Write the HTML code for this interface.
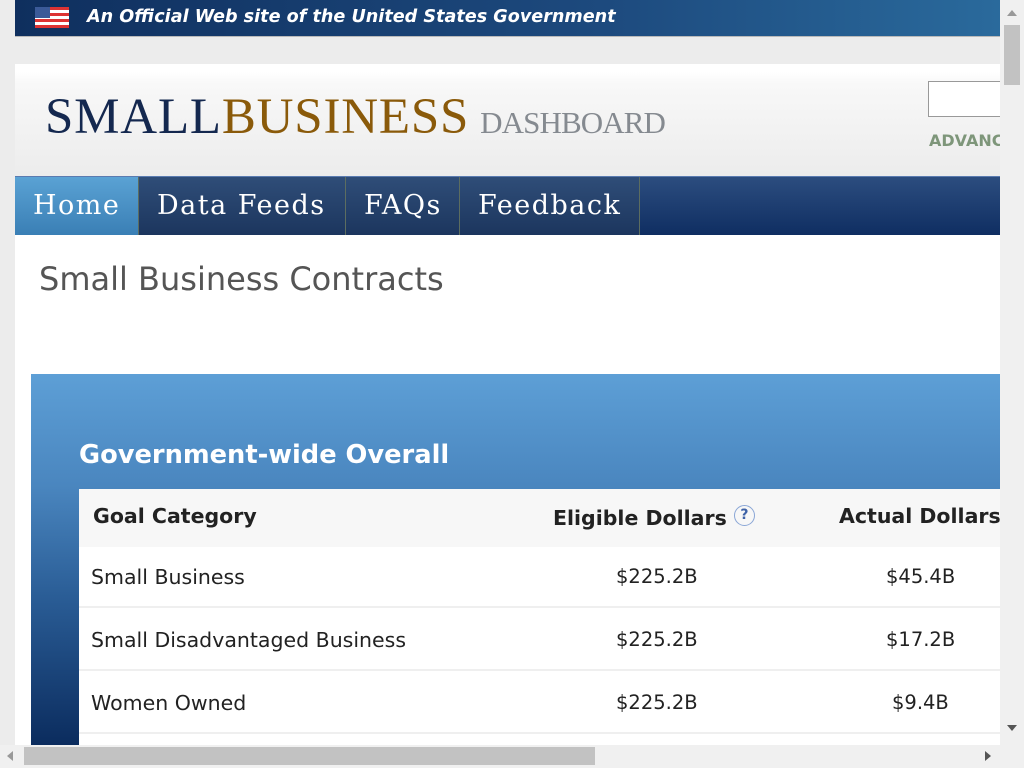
<!DOCTYPE html>
<html><head><style>
*{margin:0;padding:0;box-sizing:border-box}
html,body{width:1024px;height:768px;overflow:hidden;background:#ececec;font-family:"DejaVu Sans","Liberation Sans",sans-serif}
.top{position:absolute;left:15px;top:0;width:985px;height:37px;background:linear-gradient(90deg,#0f2f5e 0%,#1d4a7e 60%,#2a6a9c 100%);border-bottom:1px solid #b9b9b9}
.top span{position:absolute;left:72px;top:7px;color:#fff;font:italic bold 17.6px "DejaVu Sans",sans-serif;white-space:nowrap}
.flag{position:absolute;left:20px;top:7px;width:34px;height:21px;background:repeating-linear-gradient(#d33 0 3px,#fff 3px 6px)}
.flag:before{content:"";position:absolute;left:0;top:0;width:15px;height:11px;background:#3b5a98}
.hdr{position:absolute;left:15px;top:64px;width:985px;height:112px;background:linear-gradient(#fff 0,#fff 8px,#f8f8f8 20px,#ececec 100%)}
.logo{position:absolute;left:30px;top:24px;font-family:"Liberation Serif",serif;font-size:51px;letter-spacing:0.8px;white-space:nowrap}
.logo .a{color:#14284f}.logo .b{color:#8a5a0a}.logo .c{color:#858a90;font-size:31px;letter-spacing:-0.9px;margin-left:11px}
.search{position:absolute;left:913px;top:17px;width:80px;height:36px;background:#fff;border:1px solid #999;border-right:none}
.adv{position:absolute;left:914px;top:67px;color:#7e967a;font:bold 16px "DejaVu Sans",sans-serif;width:71px;overflow:hidden;white-space:nowrap}
.nav{position:absolute;left:15px;top:176px;width:985px;height:59px;background:linear-gradient(#2c4d7f,#0f2e62);border-top:1px solid #5a7bb0}
.nav a{position:absolute;top:0;height:58px;color:#fff;font:27px "DejaVu Serif",serif;line-height:58px;letter-spacing:1.5px;padding-left:18px;background:linear-gradient(#2f4d78,#1c365e);border-right:1px solid #5c6d60}
.nav a.h{background:linear-gradient(#5aa2d4,#3a7fb5);left:0;width:124px}
.main{position:absolute;left:15px;top:235px;width:985px;height:510px;background:#fff}
h1{position:absolute;left:24px;top:25px;font:normal 32px "DejaVu Sans",sans-serif;color:#555;white-space:nowrap}
.panel{position:absolute;left:16px;top:139px;width:969px;height:371px;background:linear-gradient(#5d9fd6 0%,#4a86bf 30%,#2a5d96 60%,#0b2c5e 100%)}
.panel h2{position:absolute;left:48px;top:66px;color:#fff;font:bold 25.7px "DejaVu Sans",sans-serif;white-space:nowrap}
.tbl{position:absolute;left:48px;top:115px;width:921px;height:256px;background:#fff;overflow:hidden}
.row{position:absolute;left:0;width:921px;height:61px;border-bottom:2px solid #efefef;font-size:20.5px;color:#222;white-space:nowrap}
.row div{position:absolute;top:18px}
.row .n{font-size:19.5px}
.th{background:#f7f7f7;font-weight:bold;height:58px;border:none}
</style></head><body>
<div class="top"><div class="flag"></div><span>An Official Web site of the United States Government</span></div>
<div class="hdr"><div class="logo"><span class="a">SMALL</span><span class="b">BUSINESS</span><span class="c">DASHBOARD</span></div><div class="search"></div><div class="adv">ADVANCED</div></div>
<div class="nav"><a class="h">Home</a><a style="left:124px;width:207px">Data Feeds</a><a style="left:331px;width:114px">FAQs</a><a style="left:445px;width:180px">Feedback</a></div>
<div class="main"><h1>Small Business Contracts</h1>
<div class="panel"><h2>Government-wide Overall</h2>
<div class="tbl">
<div class="row th" style="top:0"><div style="left:14px;top:15px">Goal Category</div><div style="left:474px;top:16px">Eligible Dollars <span style="display:inline-block;width:21px;height:21px;border:1px solid #8aa6d6;border-radius:50%;color:#3f63a8;font-size:14px;text-align:center;line-height:19px;vertical-align:6px">?</span></div><div style="left:760px;top:15px">Actual Dollars</div></div>
<div class="row" style="top:58px"><div style="left:12px">Small Business</div><div class="n" style="left:537px">$225.2B</div><div class="n" style="left:807px">$45.4B</div></div>
<div class="row" style="top:121px"><div style="left:12px">Small Disadvantaged Business</div><div class="n" style="left:537px">$225.2B</div><div class="n" style="left:807px">$17.2B</div></div>
<div class="row" style="top:184px"><div style="left:12px">Women Owned</div><div class="n" style="left:537px">$225.2B</div><div class="n" style="left:813px">$9.4B</div></div>
</div></div></div>
<div style="position:absolute;left:1000px;top:0;width:24px;height:745px;background:#f0f0f0"><div style="position:absolute;left:4px;top:25px;width:16px;height:60px;background:#c2c2c2"></div><div style="position:absolute;left:7px;top:10px;border:5px solid transparent;border-bottom:6px solid #999;border-top:none"></div><div style="position:absolute;left:7px;top:725px;border:5px solid transparent;border-top:6px solid #555;border-bottom:none"></div></div>
<div style="position:absolute;left:0;top:745px;width:1024px;height:23px;background:#f0f0f0"><div style="position:absolute;left:24px;top:2px;width:571px;height:18px;background:#c2c2c2"></div><div style="position:absolute;left:7px;top:6px;border:5px solid transparent;border-right:6px solid #999;border-left:none"></div><div style="position:absolute;left:985px;top:6px;border:5px solid transparent;border-left:6px solid #555;border-right:none"></div></div>
</body></html>
